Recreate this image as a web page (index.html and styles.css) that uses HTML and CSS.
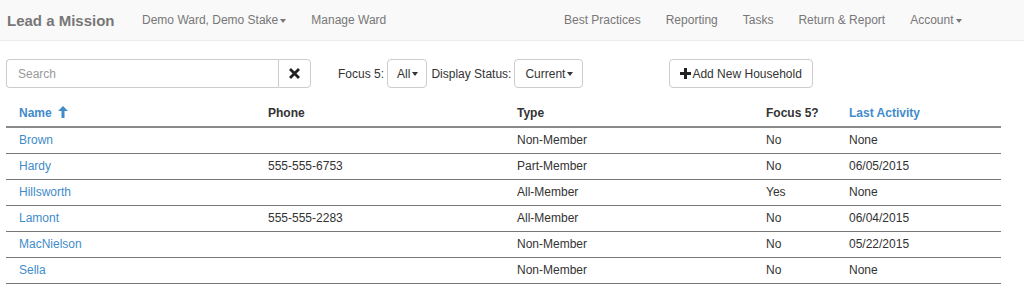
FILE: index.html
```html
<!DOCTYPE html>
<html lang="en">
<head>
    <meta charset="UTF-8">
    <title>Lead a Mission</title>
    <link rel="stylesheet" href="styles.css">
</head>
<body>

<nav class="navbar">
    <a class="brand" href="#">Lead a Mission</a>
    <ul class="nav">
        <li><a href="#">Demo Ward, Demo Stake<span class="caret"></span></a></li>
        <li><a href="#">Manage Ward</a></li>
    </ul>
    <ul class="nav nav-right">
        <li><a href="#">Best Practices</a></li>
        <li><a href="#">Reporting</a></li>
        <li><a href="#">Tasks</a></li>
        <li><a href="#">Return &amp; Report</a></li>
        <li><a href="#">Account<span class="caret"></span></a></li>
    </ul>
</nav>

<div class="container">
    <div class="toolbar">
        <div class="search-group">
            <input type="text" class="search" placeholder="Search">
            <button class="btn clear-btn" type="button">
                <svg width="11" height="11" viewBox="0 0 11 11"><path d="M2 2 L9 9 M9 2 L2 9" stroke="#222" stroke-width="2.8" stroke-linecap="square"/></svg>
            </button>
        </div>
        <span class="label focus-label">Focus 5:</span>
        <button class="btn" type="button">All<span class="caret"></span></button>
        <span class="label status-label">Display Status:</span>
        <button class="btn current-btn" type="button">Current<span class="caret"></span></button>
        <button class="btn add-btn" type="button">
            <svg width="11" height="11" viewBox="0 0 11 11"><path d="M4 0h3v4h4v3H7v4H4V7H0V4h4z" fill="#222"/></svg>Add New Household
        </button>
    </div>

    <table class="households">
        <thead>
            <tr>
                <th class="col-name sortable">Name
                    <svg class="sort-icon" width="10" height="12" viewBox="0 0 10 12"><path d="M5 0 L10 5 H6.5 V12 H3.5 V5 H0 Z" fill="#428bca"/></svg>
                </th>
                <th class="col-phone">Phone</th>
                <th class="col-type">Type</th>
                <th class="col-focus">Focus 5?</th>
                <th class="col-activity sortable">Last Activity</th>
            </tr>
        </thead>
        <tbody>
            <tr><td><a href="#">Brown</a></td><td></td><td>Non-Member</td><td>No</td><td>None</td></tr>
            <tr><td><a href="#">Hardy</a></td><td>555-555-6753</td><td>Part-Member</td><td>No</td><td>06/05/2015</td></tr>
            <tr><td><a href="#">Hillsworth</a></td><td></td><td>All-Member</td><td>Yes</td><td>None</td></tr>
            <tr><td><a href="#">Lamont</a></td><td>555-555-2283</td><td>All-Member</td><td>No</td><td>06/04/2015</td></tr>
            <tr><td><a href="#">MacNielson</a></td><td></td><td>Non-Member</td><td>No</td><td>05/22/2015</td></tr>
            <tr><td><a href="#">Sella</a></td><td></td><td>Non-Member</td><td>No</td><td>None</td></tr>
        </tbody>
    </table>
</div>

</body>
</html>
```

FILE: styles.css
```css
body {
    font-family: "Liberation Sans", Arial, sans-serif;
    font-size: 12px;
    color: #333;
    background-color: #fff;
    margin: 0;
    padding: 0;
}
a {
    text-decoration: none;
}
.navbar {
    display: flex;
    align-items: center;
    height: 40px;
    background-color: #f9f9f9;
    border-bottom: 1px solid #ececec;
    padding: 0 50px 0 7px;
}
.brand {
    font-size: 15px;
    font-weight: bold;
    color: #777;
    margin-right: 15px;
}
.nav {
    display: flex;
    list-style: none;
    margin: 0;
    padding: 0;
}
.nav li a {
    display: block;
    color: #777;
    padding: 0 12.5px;
    line-height: 40px;
}
.nav-right {
    margin-left: auto;
}
.caret {
    display: inline-block;
    width: 0;
    height: 0;
    margin-left: 2px;
    vertical-align: middle;
    border-top: 4px solid;
    border-left: 3px solid transparent;
    border-right: 3px solid transparent;
}
.container {
    padding: 0 23px 0 6px;
}
.toolbar {
    display: flex;
    align-items: center;
    margin-top: 18px;
    height: 29px;
}
.search-group {
    display: flex;
    width: 305px;
    height: 29px;
}
.search {
    flex: 1;
    height: 29px;
    box-sizing: border-box;
    border: 1px solid #ccc;
    border-right: none;
    border-radius: 4px 0 0 4px;
    padding: 0 11px;
    font-family: inherit;
    font-size: 12px;
    color: #555;
}
.search::placeholder {
    color: #999;
}
.btn {
    height: 29px;
    box-sizing: border-box;
    background: #fff;
    border: 1px solid #ccc;
    border-radius: 4px;
    padding: 0 8px 0 9px;
    font-family: inherit;
    font-size: 12px;
    color: #333;
    display: inline-flex;
    align-items: center;
}
.clear-btn {
    width: 33px;
    justify-content: center;
    padding: 0;
    border-radius: 0 4px 4px 0;
}
.label {
    color: #333;
}
.focus-label {
    margin: 0 3px 0 27px;
}
.status-label {
    margin: 0 3px 0 4px;
}
.current-btn {
    padding: 0 9px 0 10px;
}
.add-btn {
    margin-left: 86px;
    padding: 0 10px 0 10px;
}
.add-btn svg {
    margin-right: 1px;
}
.households {
    width: 995px;
    border-collapse: collapse;
    margin-top: 13px;
    table-layout: fixed;
}
.households th, .households td {
    text-align: left;
    padding: 4px 0 4px 13px;
    line-height: 17px;
}
.households th {
    font-weight: bold;
    border-bottom: 2px solid #8a8a8a;
}
.households td {
    border-bottom: 1px solid #777;
}
.households td a, .sortable {
    color: #428bca;
}
.sort-icon {
    margin-left: 3px;
    vertical-align: -1px;
}
.col-name, .col-phone, .col-type {
    width: 236px;
}
.col-focus {
    width: 70px;
}
```
